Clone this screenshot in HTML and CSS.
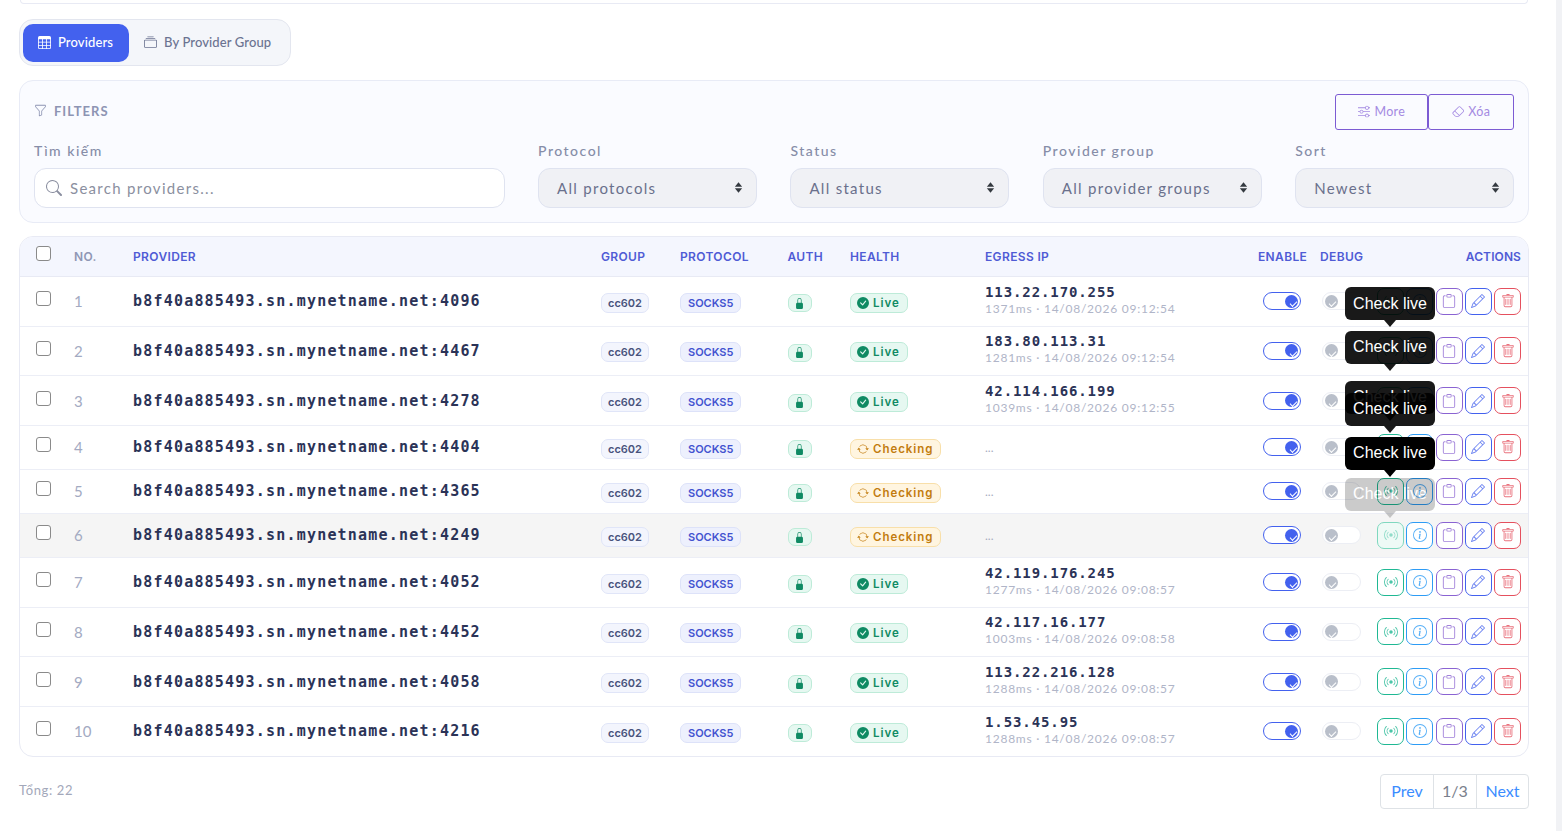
FILE: index.html

```html
<!DOCTYPE html>
<html lang="en">
<head>
  <meta charset="UTF-8">
  <title>Providers</title>
  <link rel="stylesheet" href="styles.css">
</head>
<body>

  <svg class="icon-defs" width="0" height="0">
    <symbol id="i-table" viewBox="0 0 16 16"><path d="M0 2a2 2 0 0 1 2-2h12a2 2 0 0 1 2 2v12a2 2 0 0 1-2 2H2a2 2 0 0 1-2-2zm15 2h-4v3h4zm0 4h-4v3h4zm0 4h-4v3h3a1 1 0 0 0 1-1zm-5 3v-3H6v3zm-5 0v-3H1v2a1 1 0 0 0 1 1zm-4-4h4V8H1zm0-4h4V4H1zm5-3v3h4V4zm4 4H6v3h4z"/></symbol>
    <symbol id="i-collection" viewBox="0 0 16 16"><path d="M2.5 3.5a.5.5 0 0 1 0-1h11a.5.5 0 0 1 0 1zm2-2a.5.5 0 0 1 0-1h7a.5.5 0 0 1 0 1zM0 13a1.5 1.5 0 0 0 1.5 1.5h13A1.5 1.5 0 0 0 16 13V6a1.5 1.5 0 0 0-1.5-1.5h-13A1.5 1.5 0 0 0 0 6zm1.5.5A.5.5 0 0 1 1 13V6a.5.5 0 0 1 .5-.5h13a.5.5 0 0 1 .5.5v7a.5.5 0 0 1-.5.5z"/></symbol>
    <symbol id="i-funnel" viewBox="0 0 16 16"><path d="M1.5 1.5A.5.5 0 0 1 2 1h12a.5.5 0 0 1 .5.5v2a.5.5 0 0 1-.128.334L10 8.692V13.5a.5.5 0 0 1-.342.474l-3 1A.5.5 0 0 1 6 14.5V8.692L1.628 3.834A.5.5 0 0 1 1.5 3.5zm1 .5v1.308l4.372 4.858A.5.5 0 0 1 7 8.5v5.306l2-.666V8.5a.5.5 0 0 1 .128-.334L13.5 3.308V2z"/></symbol>
    <symbol id="i-search" viewBox="0 0 16 16"><path d="M11.742 10.344a6.5 6.5 0 1 0-1.397 1.398h-.001q.044.06.098.115l3.85 3.85a1 1 0 0 0 1.415-1.414l-3.85-3.85a1 1 0 0 0-.115-.1zM12 6.5a5.5 5.5 0 1 1-11 0 5.5 5.5 0 0 1 11 0"/></symbol>
    <symbol id="i-sliders" viewBox="0 0 16 16"><path d="M11.5 2a1.5 1.5 0 1 0 0 3 1.5 1.5 0 0 0 0-3M9.05 3a2.5 2.5 0 0 1 4.9 0H16v1h-2.05a2.5 2.5 0 0 1-4.9 0H0V3zM4.5 7a1.5 1.5 0 1 0 0 3 1.5 1.5 0 0 0 0-3M2.05 8a2.5 2.5 0 0 1 4.9 0H16v1H6.95a2.5 2.5 0 0 1-4.9 0H0V8zm9.45 4a1.5 1.5 0 1 0 0 3 1.5 1.5 0 0 0 0-3m-2.45 1a2.5 2.5 0 0 1 4.9 0H16v1h-2.05a2.5 2.5 0 0 1-4.9 0H0v-1z"/></symbol>
    <symbol id="i-eraser" viewBox="0 0 16 16"><path d="M8.086 2.207a2 2 0 0 1 2.828 0l3.879 3.879a2 2 0 0 1 0 2.828l-5.5 5.5A2 2 0 0 1 7.879 15H5.12a2 2 0 0 1-1.414-.586l-2.5-2.5a2 2 0 0 1 0-2.828zm2.121.707a1 1 0 0 0-1.414 0L4.16 7.547l5.293 5.293 4.633-4.633a1 1 0 0 0 0-1.414zM8.746 13.547 3.453 8.254 1.914 9.793a1 1 0 0 0 0 1.414l2.5 2.5a1 1 0 0 0 .707.293H7.88a1 1 0 0 0 .707-.293z"/></symbol>
    <symbol id="i-updown" viewBox="0 0 16 16"><path d="M8 1.5 12.5 7h-9zM8 14.5 3.500 9h9z"/></symbol>
    <symbol id="i-lock" viewBox="0 0 16 16"><path d="M8 1a2 2 0 0 1 2 2v4H6V3a2 2 0 0 1 2-2m3 6V3a3 3 0 0 0-6 0v4a2 2 0 0 0-2 2v5a2 2 0 0 0 2 2h6a2 2 0 0 0 2-2V9a2 2 0 0 0-2-2"/></symbol>
    <symbol id="i-live" viewBox="0 0 16 16"><path d="M16 8A8 8 0 1 1 0 8a8 8 0 0 1 16 0m-3.970-3.030a.75.75 0 0 0-1.080.022L7.477 9.417 5.384 7.323a.75.75 0 0 0-1.060 1.060L6.970 11.030a.75.75 0 0 0 1.079-.020l3.992-4.990a.75.75 0 0 0-.010-1.050z"/></symbol>
    <symbol id="i-repeat" viewBox="0 0 16 16"><path d="M11.534 7h3.932a.25.25 0 0 1 .192.41l-1.966 2.360a.25.25 0 0 1-.384 0l-1.966-2.360a.25.25 0 0 1 .192-.41m-11 2h3.932a.25.25 0 0 0 .192-.41L2.692 6.230a.25.25 0 0 0-.384 0L.342 8.590A.25.25 0 0 0 .534 9"/><path d="M8 3c-1.552 0-2.940.707-3.857 1.818a.5.5 0 1 1-.771-.636A6.002 6.002 0 0 1 13.917 7H12.900A5 5 0 0 0 8 3M3.100 9a5.002 5.002 0 0 0 8.757 2.182.5.5 0 1 1 .771.636A6.002 6.002 0 0 1 2.083 9z"/></symbol>
    <symbol id="i-broadcast" viewBox="0 0 16 16"><path d="M3.050 3.050a7 7 0 0 0 0 9.900.5.5 0 0 1-.707.707 8 8 0 0 1 0-11.314.5.5 0 0 1 .707.707m2.122 2.122a4 4 0 0 0 0 5.656.5.5 0 1 1-.708.708 5 5 0 0 1 0-7.072.5.5 0 0 1 .708.708m5.656-.708a.5.5 0 0 1 .708 0 5 5 0 0 1 0 7.072.5.5 0 1 1-.708-.708 4 4 0 0 0 0-5.656.5.5 0 0 1 0-.708m2.122-2.120a.5.5 0 0 1 .707 0 8 8 0 0 1 0 11.313.5.5 0 0 1-.707-.707 7 7 0 0 0 0-9.900.5.5 0 0 1 0-.707zM10 8a2 2 0 1 1-4 0 2 2 0 0 1 4 0"/></symbol>
    <symbol id="i-info" viewBox="0 0 16 16"><path d="M8 15A7 7 0 1 1 8 1a7 7 0 0 1 0 14m0 1A8 8 0 1 0 8 0a8 8 0 0 0 0 16"/><path d="m8.930 6.588-2.290.287-.082.380.450.083c.294.070.352.176.288.469l-.738 3.468c-.194.897.105 1.319.808 1.319.545 0 1.178-.252 1.465-.598l.088-.416c-.2.176-.492.246-.686.246-.275 0-.375-.193-.304-.533zM9 4.500a1 1 0 1 1-2 0 1 1 0 0 1 2 0"/></symbol>
    <symbol id="i-clipboard" viewBox="0 0 16 16"><path d="M4 1.500H3a2 2 0 0 0-2 2V14a2 2 0 0 0 2 2h10a2 2 0 0 0 2-2V3.500a2 2 0 0 0-2-2h-1v1h1a1 1 0 0 1 1 1V14a1 1 0 0 1-1 1H3a1 1 0 0 1-1-1V3.500a1 1 0 0 1 1-1h1z"/><path d="M9.500 1a.5.5 0 0 1 .5.5v1a.5.5 0 0 1-.5.5h-3a.5.5 0 0 1-.5-.5v-1a.5.5 0 0 1 .5-.5zm-3-1A1.500 1.500 0 0 0 5 1.500v1A1.500 1.500 0 0 0 6.500 4h3A1.500 1.500 0 0 0 11 2.500v-1A1.500 1.500 0 0 0 9.500 0z"/></symbol>
    <symbol id="i-pencil" viewBox="0 0 16 16"><path d="M12.146.146a.5.5 0 0 1 .708 0l3 3a.5.5 0 0 1 0 .708l-10 10a.5.5 0 0 1-.168.110l-5 2a.5.5 0 0 1-.650-.650l2-5a.5.5 0 0 1 .110-.168zM11.207 2.500 13.500 4.793 14.793 3.500 12.500 1.207zm1.586 3L10.500 3.207 4 9.707V10h.5a.5.5 0 0 1 .5.5v.5h.5a.5.5 0 0 1 .5.5v.5h.293zm-9.761 5.175-.106.106-1.528 3.821 3.821-1.528.106-.106A.5.5 0 0 1 5 12.500V12h-.5a.5.5 0 0 1-.5-.5V11h-.5a.5.5 0 0 1-.468-.325"/></symbol>
    <symbol id="i-trash" viewBox="0 0 16 16"><path d="M5.500 5.500A.5.5 0 0 1 6 6v6a.5.5 0 0 1-1 0V6a.5.5 0 0 1 .5-.5m2.500 0a.5.5 0 0 1 .5.5v6a.5.5 0 0 1-1 0V6a.5.5 0 0 1 .5-.5m3 .5a.5.5 0 0 0-1 0v6a.5.5 0 0 0 1 0z"/><path d="M14.500 3a1 1 0 0 1-1 1H13v9a2 2 0 0 1-2 2H5a2 2 0 0 1-2-2V4h-.5a1 1 0 0 1-1-1V2a1 1 0 0 1 1-1H6a1 1 0 0 1 1-1h2a1 1 0 0 1 1 1h3.500a1 1 0 0 1 1 1zM4.118 4 4 4.059V13a1 1 0 0 0 1 1h6a1 1 0 0 0 1-1V4.059L11.882 4zM2.500 3h11V2h-11z"/></symbol>
  </svg>

  <div class="page">
    <main class="content">
      <div class="top-card"></div>

      <div class="tabs">
        <button class="tab active"><svg class="ico"><use href="#i-table"/></svg>Providers</button>
        <button class="tab"><svg class="ico"><use href="#i-collection"/></svg>By Provider Group</button>
      </div>

      <section class="filters">
        <div class="filters-head">
          <div class="filters-title"><svg class="ico"><use href="#i-funnel"/></svg>FILTERS</div>
          <div class="filters-btns">
            <button class="outline-btn more"><svg class="ico"><use href="#i-sliders"/></svg>More</button>
            <button class="outline-btn clear"><svg class="ico"><use href="#i-eraser"/></svg>Xóa</button>
          </div>
        </div>
        <div class="filters-grid">
          <div class="field">
            <label>Tìm kiếm</label>
            <div class="search"><svg class="ico"><use href="#i-search"/></svg>Search providers...</div>
          </div>
          <div class="field">
            <label>Protocol</label>
            <div class="select">All protocols<svg class="ico"><use href="#i-updown"/></svg></div>
          </div>
          <div class="field">
            <label>Status</label>
            <div class="select">All status<svg class="ico"><use href="#i-updown"/></svg></div>
          </div>
          <div class="field">
            <label>Provider group</label>
            <div class="select">All provider groups<svg class="ico"><use href="#i-updown"/></svg></div>
          </div>
          <div class="field">
            <label>Sort</label>
            <div class="select">Newest<svg class="ico"><use href="#i-updown"/></svg></div>
          </div>
        </div>
      </section>

      <div class="table-card">
        <table class="providers">
          <colgroup>
            <col class="c-check"><col class="c-no"><col class="c-provider"><col class="c-group"><col class="c-protocol"><col class="c-auth"><col class="c-health"><col class="c-ip"><col class="c-enable"><col class="c-debug"><col class="c-actions">
          </colgroup>
          <thead>
            <tr>
              <th class="check"><span class="box"></span></th>
              <th class="muted">NO.</th>
              <th>PROVIDER</th>
              <th>GROUP</th>
              <th>PROTOCOL</th>
              <th>AUTH</th>
              <th>HEALTH</th>
              <th>EGRESS IP</th>
              <th>ENABLE</th>
              <th>DEBUG</th>
              <th class="right">ACTIONS</th>
            </tr>
          </thead>
          <tbody>
            <tr class="tall">
              <td class="check"><span class="box"></span></td><td class="no">1</td>
              <td class="host">b8f40a885493.sn.mynetname.net:4096</td>
              <td><span class="chip group">cc602</span></td><td><span class="chip proto">SOCKS5</span></td>
              <td><span class="chip auth"><svg class="ico"><use href="#i-lock"/></svg></span></td>
              <td><span class="chip live"><svg class="ico"><use href="#i-live"/></svg>Live</span></td>
              <td><div class="ip">113.22.170.255</div><div class="ip-sub">1371ms · 14/08/2026 09:12:54</div></td>
              <td><span class="toggle on"></span></td><td><span class="toggle"></span></td>
              <td><div class="actions"><button class="act a-check"><svg class="ico"><use href="#i-broadcast"/></svg></button><button class="act a-info"><svg class="ico"><use href="#i-info"/></svg></button><button class="act a-copy"><svg class="ico"><use href="#i-clipboard"/></svg></button><button class="act a-edit"><svg class="ico"><use href="#i-pencil"/></svg></button><button class="act a-del"><svg class="ico"><use href="#i-trash"/></svg></button></div></td>
            </tr>
            <tr class="tall">
              <td class="check"><span class="box"></span></td><td class="no">2</td>
              <td class="host">b8f40a885493.sn.mynetname.net:4467</td>
              <td><span class="chip group">cc602</span></td><td><span class="chip proto">SOCKS5</span></td>
              <td><span class="chip auth"><svg class="ico"><use href="#i-lock"/></svg></span></td>
              <td><span class="chip live"><svg class="ico"><use href="#i-live"/></svg>Live</span></td>
              <td><div class="ip">183.80.113.31</div><div class="ip-sub">1281ms · 14/08/2026 09:12:54</div></td>
              <td><span class="toggle on"></span></td><td><span class="toggle"></span></td>
              <td><div class="actions"><button class="act a-check"><svg class="ico"><use href="#i-broadcast"/></svg></button><button class="act a-info"><svg class="ico"><use href="#i-info"/></svg></button><button class="act a-copy"><svg class="ico"><use href="#i-clipboard"/></svg></button><button class="act a-edit"><svg class="ico"><use href="#i-pencil"/></svg></button><button class="act a-del"><svg class="ico"><use href="#i-trash"/></svg></button></div></td>
            </tr>
            <tr class="tall">
              <td class="check"><span class="box"></span></td><td class="no">3</td>
              <td class="host">b8f40a885493.sn.mynetname.net:4278</td>
              <td><span class="chip group">cc602</span></td><td><span class="chip proto">SOCKS5</span></td>
              <td><span class="chip auth"><svg class="ico"><use href="#i-lock"/></svg></span></td>
              <td><span class="chip live"><svg class="ico"><use href="#i-live"/></svg>Live</span></td>
              <td><div class="ip">42.114.166.199</div><div class="ip-sub">1039ms · 14/08/2026 09:12:55</div></td>
              <td><span class="toggle on"></span></td><td><span class="toggle"></span></td>
              <td><div class="actions"><button class="act a-check"><svg class="ico"><use href="#i-broadcast"/></svg></button><button class="act a-info"><svg class="ico"><use href="#i-info"/></svg></button><button class="act a-copy"><svg class="ico"><use href="#i-clipboard"/></svg></button><button class="act a-edit"><svg class="ico"><use href="#i-pencil"/></svg></button><button class="act a-del"><svg class="ico"><use href="#i-trash"/></svg></button></div></td>
            </tr>
            <tr class="short">
              <td class="check"><span class="box"></span></td><td class="no">4</td>
              <td class="host">b8f40a885493.sn.mynetname.net:4404</td>
              <td><span class="chip group">cc602</span></td><td><span class="chip proto">SOCKS5</span></td>
              <td><span class="chip auth"><svg class="ico"><use href="#i-lock"/></svg></span></td>
              <td><span class="chip checking"><svg class="ico"><use href="#i-repeat"/></svg>Checking</span></td>
              <td><div class="ip-none">...</div></td>
              <td><span class="toggle on"></span></td><td><span class="toggle"></span></td>
              <td><div class="actions"><button class="act a-check"><svg class="ico"><use href="#i-broadcast"/></svg></button><button class="act a-info"><svg class="ico"><use href="#i-info"/></svg></button><button class="act a-copy"><svg class="ico"><use href="#i-clipboard"/></svg></button><button class="act a-edit"><svg class="ico"><use href="#i-pencil"/></svg></button><button class="act a-del"><svg class="ico"><use href="#i-trash"/></svg></button></div></td>
            </tr>
            <tr class="short">
              <td class="check"><span class="box"></span></td><td class="no">5</td>
              <td class="host">b8f40a885493.sn.mynetname.net:4365</td>
              <td><span class="chip group">cc602</span></td><td><span class="chip proto">SOCKS5</span></td>
              <td><span class="chip auth"><svg class="ico"><use href="#i-lock"/></svg></span></td>
              <td><span class="chip checking"><svg class="ico"><use href="#i-repeat"/></svg>Checking</span></td>
              <td><div class="ip-none">...</div></td>
              <td><span class="toggle on"></span></td><td><span class="toggle"></span></td>
              <td><div class="actions"><button class="act a-check"><svg class="ico"><use href="#i-broadcast"/></svg></button><button class="act a-info"><svg class="ico"><use href="#i-info"/></svg></button><button class="act a-copy"><svg class="ico"><use href="#i-clipboard"/></svg></button><button class="act a-edit"><svg class="ico"><use href="#i-pencil"/></svg></button><button class="act a-del"><svg class="ico"><use href="#i-trash"/></svg></button></div></td>
            </tr>
            <tr class="short hovered">
              <td class="check"><span class="box"></span></td><td class="no">6</td>
              <td class="host">b8f40a885493.sn.mynetname.net:4249</td>
              <td><span class="chip group">cc602</span></td><td><span class="chip proto">SOCKS5</span></td>
              <td><span class="chip auth"><svg class="ico"><use href="#i-lock"/></svg></span></td>
              <td><span class="chip checking"><svg class="ico"><use href="#i-repeat"/></svg>Checking</span></td>
              <td><div class="ip-none">...</div></td>
              <td><span class="toggle on"></span></td><td><span class="toggle"></span></td>
              <td><div class="actions"><button class="act a-check pending"><svg class="ico"><use href="#i-broadcast"/></svg></button><button class="act a-info"><svg class="ico"><use href="#i-info"/></svg></button><button class="act a-copy"><svg class="ico"><use href="#i-clipboard"/></svg></button><button class="act a-edit"><svg class="ico"><use href="#i-pencil"/></svg></button><button class="act a-del"><svg class="ico"><use href="#i-trash"/></svg></button></div></td>
            </tr>
            <tr class="tall">
              <td class="check"><span class="box"></span></td><td class="no">7</td>
              <td class="host">b8f40a885493.sn.mynetname.net:4052</td>
              <td><span class="chip group">cc602</span></td><td><span class="chip proto">SOCKS5</span></td>
              <td><span class="chip auth"><svg class="ico"><use href="#i-lock"/></svg></span></td>
              <td><span class="chip live"><svg class="ico"><use href="#i-live"/></svg>Live</span></td>
              <td><div class="ip">42.119.176.245</div><div class="ip-sub">1277ms · 14/08/2026 09:08:57</div></td>
              <td><span class="toggle on"></span></td><td><span class="toggle"></span></td>
              <td><div class="actions"><button class="act a-check"><svg class="ico"><use href="#i-broadcast"/></svg></button><button class="act a-info"><svg class="ico"><use href="#i-info"/></svg></button><button class="act a-copy"><svg class="ico"><use href="#i-clipboard"/></svg></button><button class="act a-edit"><svg class="ico"><use href="#i-pencil"/></svg></button><button class="act a-del"><svg class="ico"><use href="#i-trash"/></svg></button></div></td>
            </tr>
            <tr class="tall">
              <td class="check"><span class="box"></span></td><td class="no">8</td>
              <td class="host">b8f40a885493.sn.mynetname.net:4452</td>
              <td><span class="chip group">cc602</span></td><td><span class="chip proto">SOCKS5</span></td>
              <td><span class="chip auth"><svg class="ico"><use href="#i-lock"/></svg></span></td>
              <td><span class="chip live"><svg class="ico"><use href="#i-live"/></svg>Live</span></td>
              <td><div class="ip">42.117.16.177</div><div class="ip-sub">1003ms · 14/08/2026 09:08:58</div></td>
              <td><span class="toggle on"></span></td><td><span class="toggle"></span></td>
              <td><div class="actions"><button class="act a-check"><svg class="ico"><use href="#i-broadcast"/></svg></button><button class="act a-info"><svg class="ico"><use href="#i-info"/></svg></button><button class="act a-copy"><svg class="ico"><use href="#i-clipboard"/></svg></button><button class="act a-edit"><svg class="ico"><use href="#i-pencil"/></svg></button><button class="act a-del"><svg class="ico"><use href="#i-trash"/></svg></button></div></td>
            </tr>
            <tr class="tall">
              <td class="check"><span class="box"></span></td><td class="no">9</td>
              <td class="host">b8f40a885493.sn.mynetname.net:4058</td>
              <td><span class="chip group">cc602</span></td><td><span class="chip proto">SOCKS5</span></td>
              <td><span class="chip auth"><svg class="ico"><use href="#i-lock"/></svg></span></td>
              <td><span class="chip live"><svg class="ico"><use href="#i-live"/></svg>Live</span></td>
              <td><div class="ip">113.22.216.128</div><div class="ip-sub">1288ms · 14/08/2026 09:08:57</div></td>
              <td><span class="toggle on"></span></td><td><span class="toggle"></span></td>
              <td><div class="actions"><button class="act a-check"><svg class="ico"><use href="#i-broadcast"/></svg></button><button class="act a-info"><svg class="ico"><use href="#i-info"/></svg></button><button class="act a-copy"><svg class="ico"><use href="#i-clipboard"/></svg></button><button class="act a-edit"><svg class="ico"><use href="#i-pencil"/></svg></button><button class="act a-del"><svg class="ico"><use href="#i-trash"/></svg></button></div></td>
            </tr>
            <tr class="tall">
              <td class="check"><span class="box"></span></td><td class="no">10</td>
              <td class="host">b8f40a885493.sn.mynetname.net:4216</td>
              <td><span class="chip group">cc602</span></td><td><span class="chip proto">SOCKS5</span></td>
              <td><span class="chip auth"><svg class="ico"><use href="#i-lock"/></svg></span></td>
              <td><span class="chip live"><svg class="ico"><use href="#i-live"/></svg>Live</span></td>
              <td><div class="ip">1.53.45.95</div><div class="ip-sub">1288ms · 14/08/2026 09:08:57</div></td>
              <td><span class="toggle on"></span></td><td><span class="toggle"></span></td>
              <td><div class="actions"><button class="act a-check"><svg class="ico"><use href="#i-broadcast"/></svg></button><button class="act a-info"><svg class="ico"><use href="#i-info"/></svg></button><button class="act a-copy"><svg class="ico"><use href="#i-clipboard"/></svg></button><button class="act a-edit"><svg class="ico"><use href="#i-pencil"/></svg></button><button class="act a-del"><svg class="ico"><use href="#i-trash"/></svg></button></div></td>
            </tr>
          </tbody>
        </table>

        <!-- tooltips left open over the action column -->
        <div class="tip tip-1">Check live</div>
        <div class="tip tip-2">Check live</div>
        <div class="tip tip-3">Check live</div>
        <div class="tip tip-4">Check live</div>
        <div class="tip tip-5">Check live</div>
        <div class="tip tip-6">Check live</div>
      </div>

      <div class="table-foot">
        <div class="total">Tổng: 22</div>
        <div class="pager">
          <a class="page-link">Prev</a>
          <span class="page-link current">1/3</span>
          <a class="page-link">Next</a>
        </div>
      </div>
    </main>
    <div class="scroll-strip"></div>
  </div>

</body>
</html>
```

FILE: styles.css

```css
* {
  box-sizing: border-box;
}

html,
body {
  margin: 0;
  height: 100%;
  overflow: hidden;
}

body {
  font-family: Lato, 'Open Sans', sans-serif;
  background: #fff;
  color: #3a4266;
}

.icon-defs {
  position: absolute;
}

.ico {
  width: 1em;
  height: 1em;
  fill: currentColor;
  flex: none;
}

button {
  font-family: inherit;
  cursor: pointer;
}

.page {
  display: flex;
  height: 831px;
}

.content {
  flex: 1;
  padding: 0 27px 0 19px;
  min-width: 0;
}

.scroll-strip {
  width: 6px;
  background: #f1f2f5;
}

.top-card {
  height: 4px;
  margin: 0 1px 15px 1px;
  border: 1px solid #e8eaf4;
  border-top: none;
  border-radius: 0 0 12px 12px;
}

/* tabs */
.tabs {
  display: inline-flex;
  height: 47px;
  padding: 4px 3px;
  background: #f4f6fa;
  border: 1px solid #e3e6ef;
  border-radius: 14px;
  vertical-align: top;
}

.tab {
  display: flex;
  align-items: center;
  gap: 7px;
  height: 38px;
  padding: 0 16px 2px 15px;
  border: none;
  border-radius: 10px;
  background: transparent;
  color: #6b7391;
  font-size: 13px;
  font-weight: 500;
  letter-spacing: .12px;
}

.tab .ico {
  font-size: 13px;
}

.tab.active {
  background: #4361ee;
  color: #fff;
}

/* filters */
.filters {
  height: 143px;
  margin-top: 14px;
  padding: 13px 14px 0;
  background: #fafbff;
  border: 1px solid #e8ebf6;
  border-radius: 14px;
}

.filters-head {
  display: flex;
  justify-content: space-between;
  align-items: center;
}

.filters-title {
  display: flex;
  align-items: center;
  gap: 7px;
  padding-bottom: 3px;
  color: #8d94b3;
  font-size: 13px;
  font-weight: 700;
  letter-spacing: 1px;
}

.filters-btns {
  display: flex;
}

.outline-btn {
  display: flex;
  align-items: center;
  justify-content: center;
  gap: 4px;
  height: 36px;
  padding-bottom: 2px;
  background: transparent;
  border: 1px solid #7c5bd3;
  border-radius: 3px;
  color: #a48ae2;
  font-size: 12.5px;
  letter-spacing: .3px;
}

.outline-btn.more {
  width: 93px;
}

.outline-btn.clear {
  width: 86px;
}

.filters-grid {
  display: grid;
  grid-template-columns: 2.15fr repeat(4, 1fr);
  gap: 33.5px;
  margin-top: 12px;
}

.field label {
  display: block;
  margin-bottom: 9px;
  color: #868da8;
  font-size: 14px;
  font-weight: 500;
  letter-spacing: 1.5px;
  line-height: 17px;
}

.search,
.select {
  display: flex;
  align-items: center;
  height: 40px;
  border: 1px solid #dfe3f0;
  border-radius: 12px;
  font-size: 15px;
  letter-spacing: 1.3px;
}

.search {
  gap: 8px;
  padding: 0 11px;
  background: #fff;
  color: #8b8fa0;
}

.search .ico {
  font-size: 16px;
}

.select {
  justify-content: space-between;
  padding: 0 11px 1px 18px;
  background: #f0f1f5;
  color: #6a708c;
}

.select .ico {
  font-size: 13px;
  color: #343a40;
}

/* table */
.table-card {
  position: relative;
  margin-top: 13px;
  border: 1px solid #e8eaf4;
  border-radius: 14px;
  overflow: hidden;
}

.providers {
  width: 100%;
  border-collapse: separate;
  border-spacing: 0;
  table-layout: fixed;
}

.c-check { width: 54px; }
.c-no { width: 59px; }
.c-provider { width: 468px; }
.c-group { width: 79px; }
.c-protocol { width: 107.5px; }
.c-auth { width: 62.5px; }
.c-health { width: 135px; }
.c-ip { width: 273px; }
.c-enable { width: 62px; }
.c-debug { width: 56px; }

.providers th {
  height: 40px;
  padding: 0;
  background: #f4f6fe;
  border-bottom: 1px solid #e8eaf4;
  color: #4f5bd5;
  font-family: Inter, sans-serif;
  font-size: 12px;
  font-weight: 600;
  letter-spacing: .35px;
  text-align: left;
}

.providers th.muted {
  color: #8f96b5;
}

.providers th.right {
  padding-right: 7px;
  letter-spacing: .1px;
  text-align: right;
}

.providers th .box {
  margin-bottom: 7px;
}

.providers td {
  padding: 0;
  border-bottom: 1px solid #eceef6;
  vertical-align: middle;
}

.providers tr:last-child td {
  border-bottom: none;
}

.tall {
  height: 49.67px;
}

.providers tr.tall:last-child {
  height: 49px;
}

.short {
  height: 44px;
}

.hovered td {
  background: #f5f5f5;
}

.check {
  padding-left: 16px !important;
}

.box {
  display: block;
  width: 15px;
  height: 15px;
  margin-bottom: 5px;
  background: #fff;
  border: 1px solid #8a8a8a;
  border-radius: 3px;
}

.no {
  color: #a3aac2;
  font-size: 15px;
}

.host {
  color: #2b3357;
  font-family: 'DejaVu Sans Mono', monospace;
  font-size: 15px;
  font-weight: 700;
  letter-spacing: 1.2px;
}

.chip {
  display: inline-flex;
  align-items: center;
  height: 20px;
  margin-top: 2px;
  border: 1px solid;
  border-radius: 7px;
  font-family: Inter, sans-serif;
  font-size: 11px;
  font-weight: 600;
  vertical-align: middle;
}

.group {
  padding: 0 6px;
  background: #f3f5fd;
  border-color: #e0e5f8;
  color: #48527c;
}

.proto {
  padding: 0 7px;
  background: #edf0fd;
  border-color: #dde2f9;
  color: #4353d0;
}

.auth {
  justify-content: center;
  width: 24px;
  height: 18px;
  background: #e6f8f1;
  border-color: #bdebd8;
  color: #0f8a63;
  font-size: 11px;
}

.live,
.checking {
  gap: 4px;
  padding: 0 7px 0 6px;
  font-size: 11.5px;
  letter-spacing: .95px;
}

.live .ico,
.checking .ico {
  font-size: 12px;
}

.live {
  background: #e6f8f1;
  border-color: #bdebd8;
  color: #0f8a63;
}

.checking {
  background: #fff5e0;
  border-color: #f8dfa9;
  color: #c27c0e;
}

.ip {
  color: #2b3357;
  font-family: 'DejaVu Sans Mono', monospace;
  font-size: 14px;
  font-weight: 700;
  letter-spacing: .9px;
  line-height: 17px;
}

.ip-sub {
  margin-bottom: 3px;
  color: #b0b5c8;
  font-size: 12px;
  letter-spacing: .75px;
  line-height: 15px;
}

.ip-none {
  color: #a5abc0;
  font-size: 12px;
}

.toggle {
  position: relative;
  display: block;
  width: 39px;
  height: 18px;
  margin-left: 2px;
  background: #fff;
  border: 1px solid #eceef4;
  border-radius: 9px;
}

.toggle::before {
  content: '';
  position: absolute;
  top: 1.5px;
  left: 2px;
  width: 13px;
  height: 13px;
  border-radius: 50%;
  background: #b9bfca;
}

.toggle::after {
  content: '';
  position: absolute;
  top: 8px;
  left: 6px;
  width: 6px;
  height: 3px;
  border-left: 1px solid #fff;
  border-bottom: 1px solid #fff;
  transform: rotate(-45deg);
}

.toggle.on {
  width: 38px;
  margin-left: 5px;
  border-color: #4361ee;
}

.toggle.on::before {
  left: auto;
  right: 2px;
  background: #4361ee;
}

.toggle.on::after {
  left: 26px;
}

.actions {
  display: flex;
  justify-content: flex-end;
  gap: 2.25px;
  padding-right: 7px;
}

.act {
  display: flex;
  align-items: center;
  justify-content: center;
  width: 27px;
  height: 27px;
  padding: 0;
  background: #fff;
  border: 1px solid;
  border-radius: 7px;
  font-size: 14px;
}

.act .ico {
  opacity: .8;
}

.a-check { color: #1fb893; }
.a-info { color: #2d9cf5; }
.a-copy { color: #8a63d2; }
.a-edit { color: #4361ee; }
.a-del { color: #e5505e; }

.act.pending {
  background: #eefaf6;
  border-color: #7fd8bf;
}

.act.pending .ico {
  opacity: .45;
}

/* tooltips */
.tip {
  position: absolute;
  right: 93px;
  width: 90px;
  height: 33px;
  background: rgba(0, 0, 0, .9);
  border-radius: 6px;
  color: #fff;
  font-family: 'Liberation Sans', sans-serif;
  font-size: 16px;
  line-height: 32px;
  text-align: center;
}

.tip::after {
  content: '';
  position: absolute;
  top: 100%;
  left: 50%;
  margin-left: -6px;
  border: 6px solid transparent;
  border-bottom: none;
  border-top: 7px solid rgba(0, 0, 0, .9);
}

.tip-1 { top: 50px; line-height: 33px; }
.tip-2 { top: 94px; }
.tip-3 { top: 144px; }
.tip-4 { top: 156px; }
.tip-5 { top: 200px; background: #000; }
.tip-5::after { border-top-color: #000; }
.tip-6 { top: 241px; opacity: .22; }

/* footer */
.table-foot {
  display: flex;
  justify-content: space-between;
  margin-top: 17px;
}

.total {
  margin-top: 8px;
  color: #a3a8ba;
  font-size: 13px;
  letter-spacing: .6px;
}

.pager {
  display: flex;
  height: 35px;
  border: 1px solid #dee2e6;
  border-radius: 4px;
}

.page-link {
  display: flex;
  align-items: center;
  justify-content: center;
  width: 52px;
  padding-bottom: 1px;
  color: #3b8cff;
  font-size: 16px;
}

.page-link + .page-link {
  border-left: 1px solid #dee2e6;
}

.page-link.current {
  width: 43px;
  color: #7a7f8c;
}
```
